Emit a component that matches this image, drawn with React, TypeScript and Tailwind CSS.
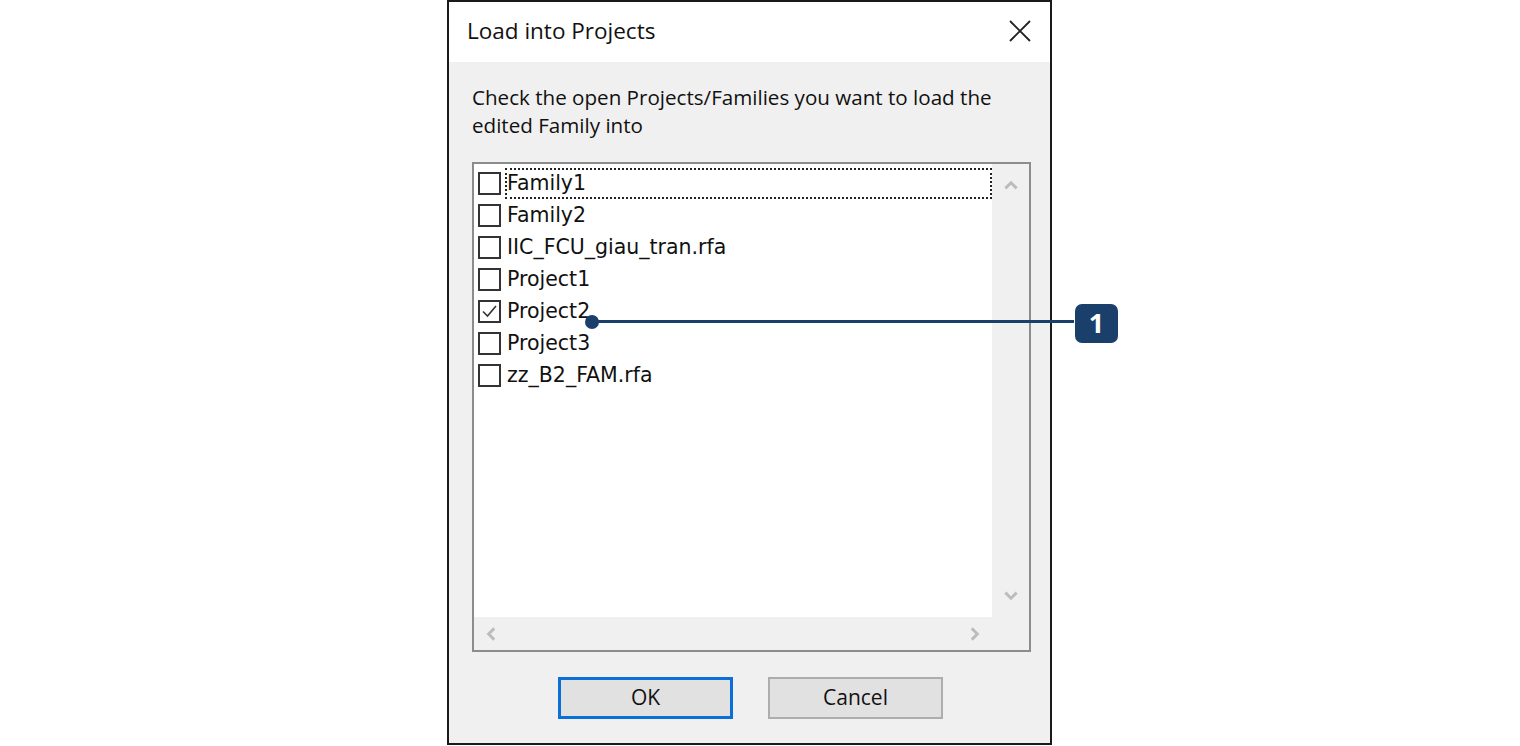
import React from 'react';

const items = [
  { name: 'Family1', checked: false, focused: true },
  { name: 'Family2', checked: false },
  { name: 'IIC_FCU_giau_tran.rfa', checked: false },
  { name: 'Project1', checked: false },
  { name: 'Project2', checked: true },
  { name: 'Project3', checked: false },
  { name: 'zz_B2_FAM.rfa', checked: false },
];

const uiFont = { fontFamily: '"Open Sans", "Noto Sans", sans-serif' };
const listFont = { fontFamily: '"DejaVu Sans", sans-serif' };

const Chevron = ({ d }: { d: string }) => (
  <svg width="18" height="18" viewBox="0 0 16 16" fill="none" stroke="#bcbcbc" strokeWidth="2.6">
    <path d={d} />
  </svg>
);

const CheckBox = ({ checked }: { checked: boolean }) => (
  <div className="w-[23px] h-[23px] border-2 border-[#333] bg-white flex items-center justify-center shrink-0">
    {checked && (
      <svg width="17" height="17" viewBox="0 0 17 17" fill="none" stroke="#333" strokeWidth="1.6">
        <path d="M2 8.5 L6.5 13 L15 3" />
      </svg>
    )}
  </div>
);

export default function App() {
  return (
    <div className="relative w-[1520px] h-[746px] bg-white overflow-hidden">
      <div className="ml-[447px] w-[605px] h-[745px] border-2 border-[#1a1a1a] flex flex-col bg-[#f0f0f0]">
        {/* Title bar */}
        <div className="h-[60px] bg-white flex items-center justify-between pl-[18px] pr-[18px]" style={uiFont}>
          <span className="text-[22.5px] text-[#111] mt-[-2px]">Load into Projects</span>
          <svg width="24" height="24" viewBox="0 0 24 24" stroke="#222" strokeWidth="1.8" className="mt-[-2px]">
            <path d="M2 2 L22 22 M22 2 L2 22" />
          </svg>
        </div>

        {/* Body */}
        <div className="flex-1 flex flex-col px-[23px]">
          <p className="mt-[21px] text-[20.6px] leading-[28px] text-[#111] w-[550px]" style={uiFont}>
            Check the open Projects/Families you want to load the edited Family into
          </p>

          {/* List box */}
          <div className="mt-[23px] w-[559px] h-[490px] border-2 border-[#8c8c8c] bg-[#f0f0f0] flex flex-col">
            <div className="flex flex-1 min-h-0">
              <div className="w-[518px] bg-white flex flex-col pl-[4px] pt-[3px]" style={listFont}>
                {items.map((it) => (
                  <div key={it.name} className="h-[32px] flex items-center gap-[4px]">
                    <CheckBox checked={it.checked} />
                    <div
                      className={
                        'h-[31px] flex items-center text-[20.5px] text-[#111] ' +
                        (it.focused ? 'flex-1 border-2 border-dotted border-[#222]' : 'border-2 border-transparent')
                      }
                    >
                      {it.name}
                    </div>
                  </div>
                ))}
              </div>
              <div className="flex-1 flex flex-col items-center justify-between py-[12px]">
                <Chevron d="M3 11 L8 6 L13 11" />
                <Chevron d="M3 5 L8 10 L13 5" />
              </div>
            </div>
            <div className="h-[33px] flex items-center justify-between pl-[9px] pr-[46px]">
              <Chevron d="M10 3 L5 8 L10 13" />
              <Chevron d="M6 3 L11 8 L6 13" />
            </div>
          </div>

          {/* Buttons */}
          <div className="mt-[25px] flex gap-[35px] pl-[86px]" style={uiFont}>
            <button className="w-[175px] h-[42px] bg-[#e1e1e1] border-[3px] border-[#0a6fd6] text-[21px] text-[#111]">
              OK
            </button>
            <button className="w-[175px] h-[42px] bg-[#e1e1e1] border-2 border-[#adadad] text-[21px] text-[#111]">
              Cancel
            </button>
          </div>
        </div>
      </div>

      {/* Callout 1 */}
      <div className="absolute left-[585px] top-[315px] w-[14px] h-[14px] rounded-full bg-[#1b3f6b]" />
      <div className="absolute left-[592px] top-[320px] w-[482px] h-[3px] bg-[#1b3f6b]" />
      <div
        className="absolute left-[1075px] top-[304px] w-[43px] h-[39px] rounded-[7px] bg-[#1b3f6b] flex items-center justify-center text-white text-[27px] font-bold"
        style={uiFont}
      >
        1
      </div>
    </div>
  );
}
